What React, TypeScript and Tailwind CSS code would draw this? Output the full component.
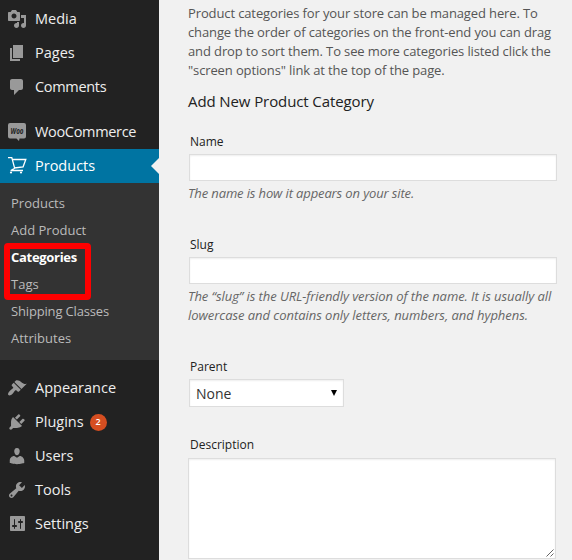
import type { ReactNode } from "react";

const icons = {
  media:
    "M13 11V4c0-.55-.45-1-1-1h-1.67L9 1H5L3.67 3H2c-.55 0-1 .45-1 1v7c0 .55.45 1 1 1h10c.55 0 1-.45 1-1zM7 4.5c1.38 0 2.5 1.12 2.5 2.5S8.38 9.5 7 9.5 4.5 8.38 4.5 7 5.62 4.5 7 4.5zM14 6h5v10.5c0 1.38-1.12 2.5-2.5 2.5S14 17.88 14 16.5s1.12-2.5 2.5-2.5c.17 0 .34.02.5.05V9h-3V6zm-4 8.05V13h2v3.5c0 1.38-1.12 2.5-2.5 2.5S7 17.88 7 16.5 8.12 14 9.5 14c.17 0 .34.02.5.05z",
  pages: "M6 15V2h10v13H6zm-1 1h8v2H3V5h2v11z",
  comments:
    "M5 2h9c1.1 0 2 .9 2 2v7c0 1.1-.9 2-2 2h-2l-5 5v-5H5c-1.1 0-2-.9-2-2V4c0-1.1.9-2 2-2z",
  appearance:
    "M14.48 11.06L7.41 3.99l1.5-1.5c.5-.56 2.3-.47 3.51.32 1.21.8 1.43 1.28 2.91 2.1 1.18.64 2.45 1.26 4.45.85zm-.71.71L6.7 4.7 4.93 6.47c-.39.39-.39 1.02 0 1.41l1.06 1.06c.39.39.39 1.03 0 1.42-.6.6-1.43 1.11-2.21 1.69-.35.26-.7.53-1.01.84C1.43 14.23.4 16.08 1.4 17.07c.99 1 2.84-.03 4.18-1.36.31-.31.58-.66.85-1.02.57-.78 1.08-1.61 1.69-2.21.39-.39 1.02-.39 1.41 0l1.06 1.06c.39.39 1.02.39 1.41 0z",
  plugins:
    "M13.11 4.36L9.87 7.6 8 5.73l3.24-3.24c.35-.34 1.05-.2 1.56.32.52.51.66 1.21.31 1.55zm-8 1.77l.91-1.12 9.01 9.01-1.19.84c-.71.71-2.63 1.16-3.82 1.16H6.14L4.9 17.26c-.59.59-1.54.59-2.12 0-.59-.58-.59-1.53 0-2.12l1.24-1.24v-3.88c0-1.13.4-3.19 1.09-3.89zm7.26 3.97l3.24-3.24c.34-.35 1.04-.21 1.55.31.52.51.66 1.21.31 1.55l-3.24 3.25z",
  users:
    "M10 9.25c-2.27 0-2.73-3.44-2.73-3.44C7 4.02 7.82 2 9.97 2c2.16 0 2.98 2.02 2.71 3.81 0 0-.41 3.44-2.68 3.44zm0 2.57L12.72 10c2.39 0 4.52 2.33 4.52 4.53v2.49s-3.65 1.13-7.24 1.13c-3.65 0-7.24-1.13-7.24-1.13v-2.49c0-2.25 1.94-4.48 4.47-4.48z",
  tools:
    "M16.68 9.77c-1.34 1.34-3.3 1.67-4.95.99l-5.41 6.52c-.99.99-2.59.99-3.58 0s-.99-2.59 0-3.57l6.52-5.42c-.68-1.65-.35-3.61.99-4.95 1.28-1.28 3.12-1.62 4.72-1.06l-2.89 2.89 2.82 2.82 2.86-2.87c.53 1.58.18 3.39-1.08 4.65zM3.81 16.21c.4.39 1.04.39 1.43 0 .4-.4.4-1.04 0-1.43-.39-.4-1.03-.4-1.43 0-.39.39-.39 1.03 0 1.43z",
  settings:
    "M18 16V3c0-.55-.45-1-1-1H4c-.55 0-1 .45-1 1v13c0 .55.45 1 1 1h13c.55 0 1-.45 1-1zM8 11h1c.55 0 1 .45 1 1s-.45 1-1 1H8v1.5c0 .28-.22.5-.5.5s-.5-.22-.5-.5V13H6c-.55 0-1-.45-1-1s.45-1 1-1h1V5.5c0-.28.22-.5.5-.5s.5.22.5.5V11zm5-2h-1c-.55 0-1-.45-1-1s.45-1 1-1h1V5.5c0-.28.22-.5.5-.5s.5.22.5.5V7h1c.55 0 1 .45 1 1s-.45 1-1 1h-1v5.5c0 .28-.22.5-.5.5s-.5-.22-.5-.5V9z",
};

function Glyph({ name }: { name: keyof typeof icons }) {
  return (
    <svg viewBox="0 0 20 20" className="size-5 fill-[#999]">
      <path d={icons[name]} />
    </svg>
  );
}

function WooIcon() {
  return (
    <svg viewBox="0 0 20 20" className="size-5">
      <path
        d="M3 1h14A2 2 0 0 1 19 3v11.500a2 2 0 0 1-2 2H12.500L12 19L9.500 16.500H3A2 2 0 0 1 1 14.500V3A2 2 0 0 1 3 1z"
        fill="#999"
      />
      <text x="10" y="11.500" textAnchor="middle" fontSize="8" fontWeight="bold" fontStyle="italic" fill="#222" textLength="13" lengthAdjust="spacingAndGlyphs">
        Woo
      </text>
    </svg>
  );
}

function CartIcon() {
  return (
    <svg viewBox="0 0 20 20" className="size-5" fill="none" stroke="#fff" strokeWidth="1.300">
      <path d="M1 1.700h3.800l2.900 10.600M5.200 3.500h13.600l-2.700 7.300-9 1.200M7.700 12.300l-4 2.200h12.300" />
      <circle cx="4" cy="16.500" r="1.100" fill="#fff" stroke="none" />
      <circle cx="14" cy="16.500" r="1.100" fill="#fff" stroke="none" />
    </svg>
  );
}

type MenuItemProps = { icon: ReactNode; label: string; badge?: string; active?: boolean; tight?: boolean };

function MenuItem({ icon, label, badge, active, tight }: MenuItemProps) {
  return (
    <li
      className={
        active
          ? "relative flex h-[34px] items-center bg-[#0074a2] pl-[7px] text-white"
          : "flex h-[34px] items-center pl-[7px] text-[#eee]"
      }
    >
      {icon}
      <span className={tight ? "ml-2 text-[14.500px] leading-5 tracking-[-0.32px]" : "ml-2 text-[14.500px] leading-5"}>
        {label}
      </span>
      {badge && (
        <span className="ml-1.5 flex h-[17px] w-[17px] items-center justify-center rounded-full bg-[#d54e21] text-[9px] font-semibold text-white">
          {badge}
        </span>
      )}
      {active && (
        <span className="absolute right-0 top-[9px] border-y-8 border-r-8 border-y-transparent border-r-[#f1f1f1]" />
      )}
    </li>
  );
}

const fieldBox = "border border-[#ddd] bg-white shadow-[inset_0_1px_2px_rgba(0,0,0,0.07)]";
const labelText = "pl-[2px] text-[12px] leading-5 text-[#222]";
const hint = "text-[13px] italic leading-[19px] text-[#666]";

function Sidebar() {
  return (
    <nav className="w-[159px] shrink-0 bg-[#222] pt-[2px]">
      <ul>
        <MenuItem icon={<Glyph name="media" />} label="Media" />
        <MenuItem icon={<Glyph name="pages" />} label="Pages" />
        <MenuItem icon={<Glyph name="comments" />} label="Comments" tight />
      </ul>
      <ul className="mt-[11px]">
        <MenuItem icon={<WooIcon />} label="WooCommerce" tight />
        <MenuItem icon={<CartIcon />} label="Products" active />
      </ul>
      <div className="relative h-[177px] bg-[#333] pl-[11px] pt-[7px] text-[13px] leading-[27px] text-[#bbb]">
        <ul>
          <li>Products</li>
          <li>Add Product</li>
          <li className="font-bold tracking-[-0.3px] text-white">Categories</li>
          <li>Tags</li>
          <li className="tracking-[-0.16px]">Shipping Classes</li>
          <li>Attributes</li>
        </ul>
        <div className="absolute left-[4px] top-[60px] h-[57px] w-[87px] rounded-[4px] border-[6px] border-[#f00]" />
      </div>
      <ul className="mt-[11px]">
        <MenuItem icon={<Glyph name="appearance" />} label="Appearance" />
        <MenuItem icon={<Glyph name="plugins" />} label="Plugins" badge="2" />
        <MenuItem icon={<Glyph name="users" />} label="Users" />
        <MenuItem icon={<Glyph name="tools" />} label="Tools" />
        <MenuItem icon={<Glyph name="settings" />} label="Settings" />
      </ul>
    </nav>
  );
}

export default function App() {
  return (
    <div className="flex h-[560px] w-[572px] overflow-hidden bg-[#f1f1f1] font-['Open_Sans',sans-serif]">
      <Sidebar />
      <main className="flex flex-1 flex-col pl-[29px] pt-[4px]">
        <p className="whitespace-nowrap text-[13px] leading-[19px] tracking-[-0.12px] text-[#555]">
          Product categories for your store can be managed here. To
          <br />
          change the order of categories on the front-end you can drag
          <br />
          and drop to sort them. To see more categories listed click the
          <br />
          "screen options" link at the top of the page.
        </p>
        <h3 className="mt-[11px] text-[15px] leading-5 tracking-[-0.1px] text-[#222]">Add New Product Category</h3>

        <label className={`${labelText} mt-[21px]`}>Name</label>
        <div className={`${fieldBox} ml-px mt-[2px] h-[27px] w-[368px]`} />
        <p className={`${hint} mt-[3px] tracking-[-0.13px]`}>The name is how it appears on your site.</p>

        <label className={`${labelText} mt-[32px]`}>Slug</label>
        <div className={`${fieldBox} ml-px mt-[2px] h-[27px] w-[368px]`} />
        <p className={`${hint} mt-[3px] whitespace-nowrap`}>
          <span className="block tracking-[-0.07px]">
            The “slug” is the URL-friendly version of the name. It is usually all
          </span>
          <span className="block tracking-[-0.04px]">lowercase and contains only letters, numbers, and hyphens.</span>
        </p>

        <label className={`${labelText} mt-[32px]`}>Parent</label>
        <div className={`${fieldBox} ml-px mt-[2px] flex h-[28px] w-[155px] items-center justify-between pl-[6px] pr-[6px]`}>
          <span className="text-[14px] text-[#333]">None</span>
          <svg viewBox="0 0 6 6" className="mb-px size-1.5">
            <path d="M0 0h6L3 6z" />
          </svg>
        </div>

        <label className={`${labelText} mt-[28px]`}>Description</label>
        <div className={`${fieldBox} mt-[3px] flex h-[101px] w-[368px] items-end justify-end`}>
          <svg viewBox="0 0 8 8" className="mb-px mr-px size-2" stroke="#555" strokeWidth="0.900" fill="none">
            <path d="M.5 7.500l7-7M4.500 7.500l3-3" />
          </svg>
        </div>
      </main>
    </div>
  );
}
